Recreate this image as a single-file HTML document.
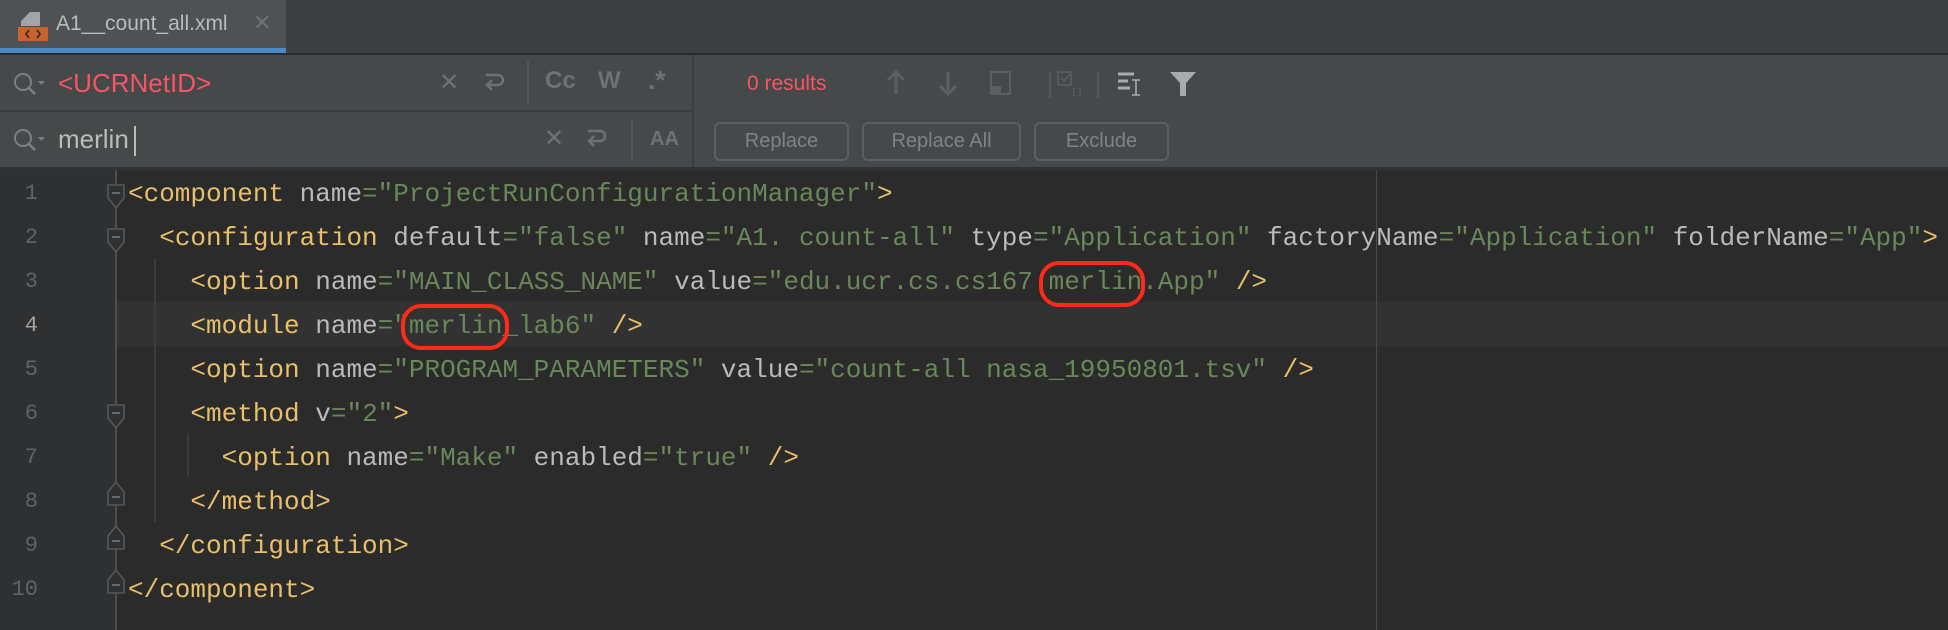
<!DOCTYPE html>
<html><head><meta charset="utf-8"><style>
*{margin:0;padding:0;box-sizing:border-box}
body{width:1948px;height:630px;overflow:hidden;background:#2b2b2b;position:relative;font-family:"Liberation Sans",sans-serif}
.a{position:absolute}
.code{position:absolute;left:128px;font-family:"Liberation Mono",monospace;font-size:26px;white-space:pre;height:44px;line-height:44px;color:#bababa;padding-top:2px}
.t{color:#e8bf6a}.s{color:#6a8759}
.ln{position:absolute;left:0;width:38px;text-align:right;font-family:"Liberation Mono",monospace;font-size:22px;line-height:44px;color:#606366;padding-top:2px}
.btn{position:absolute;top:122px;height:39px;border:2px solid #5c5f61;border-radius:6px;color:#808385;font-size:20px;line-height:35px;text-align:center}
.ic{color:#6e7275;font-size:24px}
</style></head><body>
<div class="a" style="left:0;top:0;width:1948px;height:53px;background:#3c3f41"></div>
<div class="a" style="left:0;top:0;width:286px;height:48px;background:#4e5254"></div>
<div class="a" style="left:0;top:48px;width:286px;height:5px;background:#4a88c7"></div>
<div class="a" style="left:0;top:53px;width:1948px;height:2px;background:#2b2b2b"></div>
<svg class="a" style="left:17px;top:11px" width="32" height="32"><path d="M13 1h10v14H4v-5l9-9z" fill="#a3a6a9"/><rect x="1" y="16" width="30" height="14" fill="#c9622f"/><path d="M12 19l-3 4 3 4M20 19l3 4-3 4" stroke="#2b2b2b" stroke-width="1.6" fill="none"/></svg>
<div class="a" style="left:56px;top:12px;font-size:21px;color:#bbbbbb">A1__count_all.xml</div>
<div class="a" style="left:253px;top:10px;font-size:22px;color:#6e7275">✕</div>
<div class="a" style="left:0;top:55px;width:1948px;height:113px;background:#45494a"></div>
<div class="a" style="left:0;top:110px;width:692px;height:2px;background:#3a3d3e"></div>
<div class="a" style="left:692px;top:55px;width:2px;height:113px;background:#3a3d3e"></div>
<div class="a" style="left:0;top:167px;width:1948px;height:3px;background:#303233"></div>
<svg class="a" style="left:13px;top:72px" width="34" height="26"><circle cx="10" cy="10" r="8" stroke="#7a8085" stroke-width="2" fill="none"/><path d="M16 16l6 6" stroke="#7a8085" stroke-width="2.5"/><path d="M25 9h7l-3.5 4z" fill="#7a8085"/></svg>
<svg class="a" style="left:13px;top:128px" width="34" height="26"><circle cx="10" cy="10" r="8" stroke="#7a8085" stroke-width="2" fill="none"/><path d="M16 16l6 6" stroke="#7a8085" stroke-width="2.5"/><path d="M25 9h7l-3.5 4z" fill="#7a8085"/></svg>
<div class="a" style="left:58px;top:68px;font-size:26px;color:#f75464">&lt;UCRNetID&gt;</div>
<div class="a" style="left:58px;top:124px;font-size:26px;color:#bbbbbb">merlin</div>
<div class="a" style="left:134px;top:126px;width:2px;height:30px;background:#bbbbbb"></div>
<div class="a ic" style="left:439px;top:68px">✕</div>
<svg class="a" style="left:482px;top:71px" width="24" height="24"><path d="M4 4h12a5 5 0 0 1 0 10H6M10 9l-5 5 5 5" stroke="#6e7275" stroke-width="2.5" fill="none"/></svg>
<div class="a" style="left:527px;top:62px;width:2px;height:42px;background:#55595b"></div>
<div class="a" style="left:545px;top:67px;font-size:24px;font-weight:bold;color:#6e7275">Cc</div>
<div class="a" style="left:598px;top:67px;font-size:24px;font-weight:bold;color:#6e7275">W</div>
<div class="a" style="left:648px;top:65px;font-size:26px;font-weight:bold;color:#6e7275">.*</div>
<div class="a ic" style="left:544px;top:124px">✕</div>
<svg class="a" style="left:584px;top:127px" width="24" height="24"><path d="M4 4h12a5 5 0 0 1 0 10H6M10 9l-5 5 5 5" stroke="#6e7275" stroke-width="2.5" fill="none"/></svg>
<div class="a" style="left:631px;top:119px;width:2px;height:42px;background:#55595b"></div>
<div class="a" style="left:650px;top:128px;font-size:20px;font-weight:bold;color:#6e7275">AA</div>
<div class="a" style="left:747px;top:72px;font-size:21px;color:#f75464">0 results</div>
<svg class="a" style="left:884px;top:68px" width="320" height="30">
<path d="M12 4v22M4 12l8-8 8 8" stroke="#5c5f61" stroke-width="3" fill="none"/>
<path d="M64 4v22M56 18l8 8 8-8" stroke="#5c5f61" stroke-width="3" fill="none"/>
<rect x="107" y="4" width="19" height="22" stroke="#5c5f61" stroke-width="2" fill="none"/><rect x="107" y="18" width="10" height="8" fill="#5c5f61"/>
<path d="M166 4v30" stroke="#55595b" stroke-width="2"/>
<rect x="174" y="4" width="13" height="13" stroke="#5c5f61" stroke-width="1.5" fill="none"/><path d="M177 10l3 3 6-7" stroke="#5c5f61" stroke-width="1.5" fill="none"/><path d="M190 20v9M196 20v9" stroke="#5c5f61" stroke-width="1.5" stroke-dasharray="2 1"/>
<path d="M214 4v30" stroke="#55595b" stroke-width="2"/>
<path d="M234 6h16M234 13h10M234 20h12" stroke="#a8abad" stroke-width="3"/><path d="M252 12v15M248 12h8M248 27h8" stroke="#a8abad" stroke-width="1.6"/>
<path d="M286 4h26l-10 11v13h-6V15z" fill="#a8abad"/>
</svg>
<div class="btn" style="left:714px;width:135px">Replace</div>
<div class="btn" style="left:862px;width:159px">Replace All</div>
<div class="btn" style="left:1034px;width:135px">Exclude</div>
<div class="a" style="left:0;top:170px;width:116px;height:460px;background:#2f3032"></div>
<div class="a" style="left:117px;top:302px;width:1831px;height:44px;background:#323232"></div>
<div class="a" style="left:115px;top:170px;width:2px;height:460px;background:#4b4d4f"></div>
<div class="a" style="left:1376px;top:170px;width:1px;height:460px;background:#4a4a4a"></div>
<div class="a" style="left:154px;top:258px;width:2px;height:264px;background:#3b3b3b"></div>
<div class="a" style="left:187px;top:433px;width:2px;height:44px;background:#3b3b3b"></div>
<svg class="a" style="left:100px;top:170px" width="32" height="460">
<g fill="#2f3032" stroke="#55585a" stroke-width="1.6">
<path d="M8 15h16v13l-8 10-8-10z"/><path d="M8 59h16v13l-8 10-8-10z"/><path d="M8 235h16v13l-8 10-8-10z"/>
<path d="M8 335h16v-13l-8-10-8 10z"/><path d="M8 379h16v-13l-8-10-8 10z"/><path d="M8 423h16v-13l-8-10-8 10z"/>
</g>
<g stroke="#7a7d80" stroke-width="1.6"><path d="M12 23h8M12 67h8M12 243h8M12 327h8M12 371h8M12 415h8"/></g>
</svg>
<div class="ln" style="top:170px">1</div>
<div class="ln" style="top:214px">2</div>
<div class="ln" style="top:258px">3</div>
<div class="ln" style="top:302px;color:#a4a3a3">4</div>
<div class="ln" style="top:346px">5</div>
<div class="ln" style="top:390px">6</div>
<div class="ln" style="top:434px">7</div>
<div class="ln" style="top:478px">8</div>
<div class="ln" style="top:522px">9</div>
<div class="ln" style="top:566px">10</div>
<div class="code" style="top:170px"><span class="t">&lt;component</span> name<span class="s">="ProjectRunConfigurationManager"</span><span class="t">&gt;</span></div>
<div class="code" style="top:214px">  <span class="t">&lt;configuration</span> default<span class="s">="false"</span> name<span class="s">="A1. count-all"</span> type<span class="s">="Application"</span> factoryName<span class="s">="Application"</span> folderName<span class="s">="App"</span><span class="t">&gt;</span></div>
<div class="code" style="top:258px">    <span class="t">&lt;option</span> name<span class="s">="MAIN_CLASS_NAME"</span> value<span class="s">="edu.ucr.cs.cs167.merlin.App"</span> <span class="t">/&gt;</span></div>
<div class="code" style="top:302px">    <span class="t">&lt;module</span> name<span class="s">="merlin_lab6"</span> <span class="t">/&gt;</span></div>
<div class="code" style="top:346px">    <span class="t">&lt;option</span> name<span class="s">="PROGRAM_PARAMETERS"</span> value<span class="s">="count-all nasa_19950801.tsv"</span> <span class="t">/&gt;</span></div>
<div class="code" style="top:390px">    <span class="t">&lt;method</span> v<span class="s">="2"</span><span class="t">&gt;</span></div>
<div class="code" style="top:434px">      <span class="t">&lt;option</span> name<span class="s">="Make"</span> enabled<span class="s">="true"</span> <span class="t">/&gt;</span></div>
<div class="code" style="top:478px">    <span class="t">&lt;/method&gt;</span></div>
<div class="code" style="top:522px">  <span class="t">&lt;/configuration&gt;</span></div>
<div class="code" style="top:566px"><span class="t">&lt;/component&gt;</span></div>
<div class="a" style="left:1039px;top:261px;width:106px;height:46px;border:4px solid #ff2a1a;border-radius:20px"></div>
<div class="a" style="left:401px;top:304px;width:108px;height:46px;border:4px solid #ff2a1a;border-radius:20px"></div>
</body></html>
